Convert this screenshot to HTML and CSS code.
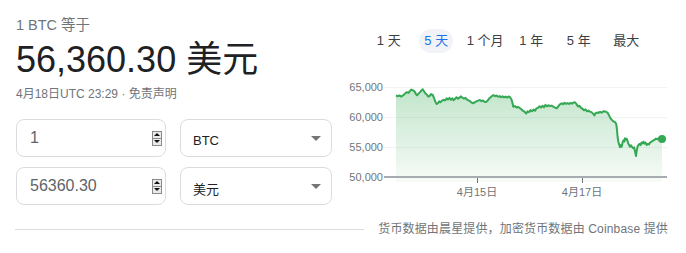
FILE: index.html
```html
<!DOCTYPE html>
<html lang="zh-CN">
<head>
    <meta charset="UTF-8">
    <meta name="viewport" content="width=device-width, initial-scale=1.0">
    <title>BTC 换算</title>
    <link rel="stylesheet" href="styles.css">
</head>
<body>
    <div class="main">
        <div class="left">
            <div class="from-line">1 BTC 等于</div>
            <div class="big-value">56,360.30 美元</div>
            <div class="date-line">4月18日UTC 23:29 · 免责声明</div>

            <div class="conv-row">
                <div class="num-box">
                    <span class="num-text">1</span>
                    <span class="spinner"><i class="up"></i><i class="down"></i></span>
                </div>
                <div class="sel-box">
                    <span class="sel-text">BTC</span>
                    <span class="caret"></span>
                </div>
            </div>
            <div class="conv-row">
                <div class="num-box">
                    <span class="num-text">56360.30</span>
                    <span class="spinner"><i class="up"></i><i class="down"></i></span>
                </div>
                <div class="sel-box">
                    <span class="sel-text">美元</span>
                    <span class="caret"></span>
                </div>
            </div>
        </div>

        <div class="right">
            <div class="tabs">
                <div class="tab"><span>1 天</span></div>
                <div class="tab active"><span>5 天</span></div>
                <div class="tab"><span>1 个月</span></div>
                <div class="tab"><span>1 年</span></div>
                <div class="tab"><span>5 年</span></div>
                <div class="tab"><span>最大</span></div>
            </div>

            <svg class="chart" width="346" height="125" viewBox="340 75 346 125">
                <defs>
                    <linearGradient id="area" x1="0" y1="0" x2="0" y2="1">
                        <stop offset="0" stop-color="#34a853" stop-opacity="0.3"/>
                        <stop offset="1" stop-color="#34a853" stop-opacity="0.04"/>
                    </linearGradient>
                </defs>
                <!-- 网格线 -->
                <line class="grid" x1="384" y1="87.5" x2="667" y2="87.5"/>
                <line class="grid" x1="384" y1="117.5" x2="667" y2="117.5"/>
                <line class="grid" x1="384" y1="147.5" x2="667" y2="147.5"/>

                <text class="ylabel" x="383" y="91">65,000</text>
                <text class="ylabel" x="383" y="121">60,000</text>
                <text class="ylabel" x="383" y="151">55,000</text>
                <text class="ylabel" x="383" y="181">50,000</text>

                <path class="fill" d="M396 95.5 L398 96.2 L399.5 95.4 L401 96.6 L402.5 95.8 L404 94.6 L405.5 93.1 L407 92.2 L408.5 92.9 L410 90.8 L411.5 89.6 L413 90.4 L414.5 91.3 L416 94.2 L417 95.3 L418.5 93.6 L420 92.1 L421.5 90.4 L422.7 89.3 L424 91.2 L425.5 93.5 L427 94.8 L428.3 96.7 L429.8 95.9 L431 94.1 L432.7 95 L434 97.8 L435.2 101.5 L436.7 104 L438 103.2 L439.2 101.4 L440.5 102.3 L442 100.6 L443.5 99.8 L445 100.5 L446.7 98.3 L448 99.6 L449.5 97.9 L451 99.8 L452.3 98.4 L453.5 100.1 L455 98.9 L456.5 97.2 L458 98.8 L459.5 97.6 L461 96.4 L462.5 97.9 L464 98.6 L465.5 97.8 L467 99.6 L468.5 100.4 L470 101.2 L471.5 102.5 L473.3 103.3 L475 102.1 L476.5 101.3 L478 100.6 L480 100 L481.5 101.2 L483 100.4 L484.5 101.9 L486.7 101.7 L488 100.1 L489.5 98.2 L491 96.9 L493.3 95 L495 96.2 L496.5 95.5 L498 96.8 L499.5 96.1 L501 97.3 L502.5 96.2 L504 97.4 L505.5 96.6 L507 97.6 L508.5 96.5 L510 97.2 L511.5 99.5 L512.5 103 L513.3 106.7 L515 106.1 L516.5 107.5 L518 106.9 L520 108.3 L521.5 109.4 L523 110.8 L524.5 111.6 L526.2 113.6 L527.5 111.4 L529 112.2 L530.5 110.1 L532 111.3 L533.5 109.6 L535 110.8 L536.5 108.4 L538 107.9 L539.5 106.3 L541 107.5 L542.5 105.8 L544 107.2 L545.5 104.9 L547 106.4 L548.5 105.2 L550 106.1 L551.5 105.6 L553.3 106.7 L555 107.6 L556.7 108.3 L558.2 106.4 L559.7 104.6 L561.5 103.3 L563 104.2 L564.5 102.8 L566 103.9 L567.5 103.1 L569 103.9 L570.5 102.9 L572 103.7 L573.5 102.5 L575 102.3 L576.5 104.1 L578 106.4 L579.5 105.8 L581 107.9 L582.5 108.8 L584 110.3 L585.5 109.4 L587 111.3 L588.5 110.6 L590 111.7 L591.5 112.1 L593 113.6 L594.5 115.4 L595.5 113.2 L597 112.6 L598.5 112.9 L600 111.7 L601.5 112.8 L603 111.4 L604.5 111.2 L606 111.9 L607.5 112.6 L609 115.2 L610.5 118.4 L612 120.1 L613.5 121.4 L615 122.2 L616.2 123.8 L617 130 L617.6 137 L618.3 141.7 L619.2 144.6 L620 147.2 L620.9 145.1 L621.7 146.7 L622.6 142.3 L623.5 140.2 L624.3 141.6 L625 138.3 L625.9 139.6 L626.6 138.7 L627.3 140 L628.2 143.5 L629 144.8 L630 146.7 L631 145.3 L632 147.1 L633.3 148.3 L634.2 147.4 L635.2 152.4 L636 156 L636.8 150.2 L637.6 146.6 L638.5 145 L639.5 143.9 L640.5 145.2 L641.5 142.6 L642.5 143.4 L643.3 141.7 L644.3 143.6 L645.3 142.4 L646.7 145 L648 143.8 L649 144.4 L650 142.6 L651.7 141.7 L653 140.6 L654.5 139.9 L656 138.6 L657.5 139.2 L659 138.2 L660.5 139.1 L662 139 L662 182 L396 182 Z"/>
                <path class="line" d="M396 95.5 L398 96.2 L399.5 95.4 L401 96.6 L402.5 95.8 L404 94.6 L405.5 93.1 L407 92.2 L408.5 92.9 L410 90.8 L411.5 89.6 L413 90.4 L414.5 91.3 L416 94.2 L417 95.3 L418.5 93.6 L420 92.1 L421.5 90.4 L422.7 89.3 L424 91.2 L425.5 93.5 L427 94.8 L428.3 96.7 L429.8 95.9 L431 94.1 L432.7 95 L434 97.8 L435.2 101.5 L436.7 104 L438 103.2 L439.2 101.4 L440.5 102.3 L442 100.6 L443.5 99.8 L445 100.5 L446.7 98.3 L448 99.6 L449.5 97.9 L451 99.8 L452.3 98.4 L453.5 100.1 L455 98.9 L456.5 97.2 L458 98.8 L459.5 97.6 L461 96.4 L462.5 97.9 L464 98.6 L465.5 97.8 L467 99.6 L468.5 100.4 L470 101.2 L471.5 102.5 L473.3 103.3 L475 102.1 L476.5 101.3 L478 100.6 L480 100 L481.5 101.2 L483 100.4 L484.5 101.9 L486.7 101.7 L488 100.1 L489.5 98.2 L491 96.9 L493.3 95 L495 96.2 L496.5 95.5 L498 96.8 L499.5 96.1 L501 97.3 L502.5 96.2 L504 97.4 L505.5 96.6 L507 97.6 L508.5 96.5 L510 97.2 L511.5 99.5 L512.5 103 L513.3 106.7 L515 106.1 L516.5 107.5 L518 106.9 L520 108.3 L521.5 109.4 L523 110.8 L524.5 111.6 L526.2 113.6 L527.5 111.4 L529 112.2 L530.5 110.1 L532 111.3 L533.5 109.6 L535 110.8 L536.5 108.4 L538 107.9 L539.5 106.3 L541 107.5 L542.5 105.8 L544 107.2 L545.5 104.9 L547 106.4 L548.5 105.2 L550 106.1 L551.5 105.6 L553.3 106.7 L555 107.6 L556.7 108.3 L558.2 106.4 L559.7 104.6 L561.5 103.3 L563 104.2 L564.5 102.8 L566 103.9 L567.5 103.1 L569 103.9 L570.5 102.9 L572 103.7 L573.5 102.5 L575 102.3 L576.5 104.1 L578 106.4 L579.5 105.8 L581 107.9 L582.5 108.8 L584 110.3 L585.5 109.4 L587 111.3 L588.5 110.6 L590 111.7 L591.5 112.1 L593 113.6 L594.5 115.4 L595.5 113.2 L597 112.6 L598.5 112.9 L600 111.7 L601.5 112.8 L603 111.4 L604.5 111.2 L606 111.9 L607.5 112.6 L609 115.2 L610.5 118.4 L612 120.1 L613.5 121.4 L615 122.2 L616.2 123.8 L617 130 L617.6 137 L618.3 141.7 L619.2 144.6 L620 147.2 L620.9 145.1 L621.7 146.7 L622.6 142.3 L623.5 140.2 L624.3 141.6 L625 138.3 L625.9 139.6 L626.6 138.7 L627.3 140 L628.2 143.5 L629 144.8 L630 146.7 L631 145.3 L632 147.1 L633.3 148.3 L634.2 147.4 L635.2 152.4 L636 156 L636.8 150.2 L637.6 146.6 L638.5 145 L639.5 143.9 L640.5 145.2 L641.5 142.6 L642.5 143.4 L643.3 141.7 L644.3 143.6 L645.3 142.4 L646.7 145 L648 143.8 L649 144.4 L650 142.6 L651.7 141.7 L653 140.6 L654.5 139.9 L656 138.6 L657.5 139.2 L659 138.2 L660.5 139.1 L662 139"/>
                <circle class="dot" cx="662" cy="139" r="4"/>

                <!-- x轴 -->
                <line class="axis" x1="384" y1="177" x2="667" y2="177"/>
                <line class="tick" x1="477.5" y1="178" x2="477.5" y2="183"/>
                <line class="tick" x1="582.5" y1="178" x2="582.5" y2="183"/>
                <text class="xlabel" x="477" y="196">4月15日</text>
                <text class="xlabel" x="582" y="196">4月17日</text>
            </svg>
        </div>
    </div>

    <div class="footer">
        <div class="rule"></div>
        <div class="source">货币数据由晨星提供，加密货币数据由 Coinbase 提供</div>
    </div>
</body>
</html>
```

FILE: styles.css
```css
body {
    margin: 0;
    font-family: "Liberation Sans", Arial, "Noto Sans CJK SC", sans-serif;
    color: #202124;
    background: #fff;
}
.main {
    display: flex;
}
.left {
    width: 316px;
    padding: 15px 8px 0 16px;
}
.from-line {
    font-size: 14.5px;
    line-height: 20px;
    color: #70757a;
}
.big-value {
    margin-top: 3px;
    font-size: 36px;
    line-height: 44px;
    color: #202124;
}
.date-line {
    margin-top: 4px;
    font-size: 12px;
    line-height: 16px;
    color: #70757a;
}
.conv-row {
    display: flex;
    gap: 14px;
    margin-top: 10px;
}
.date-line + .conv-row {
    margin-top: 17px;
}
.num-box,
.sel-box {
    height: 38px;
    box-sizing: border-box;
    border: 1px solid #dadce0;
    border-radius: 8px;
    display: flex;
    align-items: center;
}
.num-box {
    width: 150px;
    padding: 0 3px 0 13px;
}
.num-text {
    flex: 1;
    font-size: 16px;
    color: #5f6368;
}
.spinner {
    width: 10px;
    height: 15px;
    box-sizing: border-box;
    border: 1px solid #8a8a8a;
    background: #e9e9e9;
    display: flex;
    flex-direction: column;
}
.spinner i {
    flex: 1;
    display: flex;
    align-items: center;
    justify-content: center;
}
.spinner .up {
    border-bottom: 1px solid #8a8a8a;
}
.spinner i::after {
    content: "";
    border-left: 3px solid transparent;
    border-right: 3px solid transparent;
}
.spinner .up::after {
    border-bottom: 3px solid #111;
}
.spinner .down::after {
    border-top: 3px solid #111;
}
.sel-box {
    width: 152px;
    padding: 5px 10px 0 12px;
}
.sel-text {
    flex: 1;
    font-size: 13px;
    color: #202124;
}
.caret {
    margin-top: -5px;
    border-left: 5px solid transparent;
    border-right: 5px solid transparent;
    border-top: 5px solid #757575;
}
.right {
    width: 346px;
}
.tabs {
    display: grid;
    grid-template-columns: repeat(6, 47.5px);
    margin: 29px 0 0 25px;
}
.tab {
    display: flex;
    justify-content: center;
}
.tab span {
    width: 34px;
    height: 24px;
    line-height: 24px;
    border-radius: 12px;
    text-align: center;
    font-size: 13px;
    color: #3c4043;
    white-space: nowrap;
}
.tab.active span {
    background: #f1f3f6;
    color: #1a73e8;
}
.chart {
    display: block;
    margin-top: 22px;
}
.grid {
    stroke: #f1f3f4;
    stroke-width: 1;
}
.ylabel {
    font-size: 11px;
    fill: #70757a;
    text-anchor: end;
}
.xlabel {
    font-size: 11px;
    fill: #70757a;
    text-anchor: middle;
}
.fill {
    fill: url(#area);
}
.line {
    fill: none;
    stroke: #34a853;
    stroke-width: 2;
    stroke-linejoin: round;
}
.dot {
    fill: #34a853;
}
.axis {
    stroke: #a8abaf;
    stroke-width: 2;
}
.tick {
    stroke: #70757a;
    stroke-width: 1;
}
.footer {
    display: flex;
    align-items: center;
    margin-top: 16px;
    padding: 0 18px 0 15px;
}
.rule {
    flex: 1;
    border-top: 1px solid #dadce0;
}
.source {
    margin-left: 14px;
    font-size: 12px;
    line-height: 16px;
    letter-spacing: 0.15px;
    color: #70757a;
}
```
